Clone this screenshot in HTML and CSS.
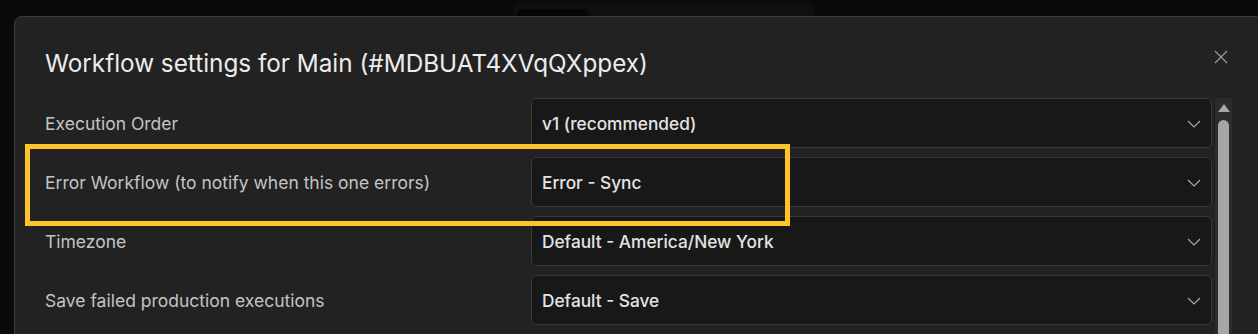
FILE: index.html
```html
<!DOCTYPE html>
<html lang="en">
<head>
<meta charset="utf-8">
<title>Workflow settings</title>
<link rel="stylesheet" href="styles.css">
</head>
<body>
<div class="backdrop">
  <div class="topbar"><div class="topbar-tab"></div></div>
</div>
<div class="modal">
  <div class="modal-header">
    <h1 class="modal-title">Workflow settings for Main (#MDBUAT4XVqQXppex)</h1>
    <button class="close" aria-label="Close">
      <svg width="14" height="14" viewBox="0 0 14 14"><path d="M1 1L13 13M13 1L1 13" stroke="#9a9a9a" stroke-width="1.3" fill="none"/></svg>
    </button>
  </div>
  <div class="modal-body">
    <div class="rows">
      <div class="row">
        <div class="label">Execution Order</div>
        <div class="select"><span class="value">v1 (recommended)</span><svg class="chev" width="14" height="8" viewBox="0 0 14 8"><path d="M1 1L7 7L13 1" stroke="#a8a8a8" stroke-width="1.2" fill="none"/></svg></div>
      </div>
      <div class="row">
        <div class="label">Error Workflow (to notify when this one errors)</div>
        <div class="select"><span class="value">Error - Sync</span><svg class="chev" width="14" height="8" viewBox="0 0 14 8"><path d="M1 1L7 7L13 1" stroke="#a8a8a8" stroke-width="1.2" fill="none"/></svg></div>
      </div>
      <div class="row">
        <div class="label">Timezone</div>
        <div class="select"><span class="value">Default - America/New York</span><svg class="chev" width="14" height="8" viewBox="0 0 14 8"><path d="M1 1L7 7L13 1" stroke="#a8a8a8" stroke-width="1.2" fill="none"/></svg></div>
      </div>
      <div class="row">
        <div class="label">Save failed production executions</div>
        <div class="select"><span class="value">Default - Save</span><svg class="chev" width="14" height="8" viewBox="0 0 14 8"><path d="M1 1L7 7L13 1" stroke="#a8a8a8" stroke-width="1.2" fill="none"/></svg></div>
      </div>
    </div>
    <div class="scrollbar">
      <div class="scroll-up"></div>
      <div class="scroll-thumb"></div>
    </div>
  </div>
  <div class="highlight"></div>
</div>
</body>
</html>
```

FILE: styles.css
```css
* { box-sizing: border-box; }
html, body {
  margin: 0;
  padding: 0;
  width: 1258px;
  height: 334px;
  overflow: hidden;
  background: #0a0a0a;
  font-family: Inter, "Noto Sans", sans-serif;
}
.backdrop {
  height: 16px;
  display: flex;
  padding-left: 513px;
  padding-top: 4px;
}
.topbar {
  width: 302px;
  height: 20px;
  background: #0f0f0f;
  border-radius: 6px;
  padding: 5px 0 0 4px;
}
.topbar-tab {
  width: 72px;
  height: 14px;
  background: #060606;
  border-radius: 5px;
}
.modal {
  position: absolute;
  left: 14px;
  top: 16px;
  width: 1250px;
  height: 330px;
  background: #222222;
  border: 1px solid #3c3c3c;
  border-radius: 8px;
}
.modal-header {
  display: flex;
  justify-content: space-between;
  align-items: flex-start;
  padding: 29px 29px 0 30px;
  height: 80px;
}
.modal-title {
  margin: 0;
  font-size: 24.3px;
  font-weight: 400;
  color: #ececec;
  line-height: 34px;
}
.close {
  background: none;
  border: 0;
  padding: 0;
  margin-right: 6px;
  margin-top: 4px;
  display: flex;
}
.modal-body {
  display: flex;
  padding-left: 30px;
  margin-top: 1px;
}
.rows {
  display: flex;
  flex-direction: column;
  gap: 9px;
  width: 1167px;
}
.row {
  display: flex;
  align-items: center;
  height: 50px;
}
.label {
  width: 486px;
  font-size: 17.5px;
  color: #c4c4c4;
}
.select {
  flex: 1;
  height: 50px;
  background: #181818;
  border: 1px solid #383838;
  border-radius: 5px;
  display: flex;
  align-items: center;
  justify-content: space-between;
  padding: 0 10px 0 10px;
}
.value {
  font-size: 17.3px;
  font-weight: 500;
  color: #e4e4e4;
}
.chev { margin-top: 1px; }
.scrollbar {
  width: 17px;
  margin-left: 3px;
  background: #2c2c2c;
  display: flex;
  flex-direction: column;
  align-items: center;
  height: 240px;
}
.scroll-up {
  width: 0;
  height: 0;
  border-left: 6px solid transparent;
  border-right: 6px solid transparent;
  border-bottom: 8px solid #a8a8a8;
  margin-top: 6px;
}
.scroll-thumb {
  width: 11px;
  flex: 1;
  margin-top: 8px;
  background: #a6a6a6;
  border-radius: 6px 6px 0 0;
}
.highlight {
  position: absolute;
  left: 10px;
  top: 127px;
  width: 765px;
  height: 82px;
  border: 5px solid #ffc429;
  pointer-events: none;
}
```
